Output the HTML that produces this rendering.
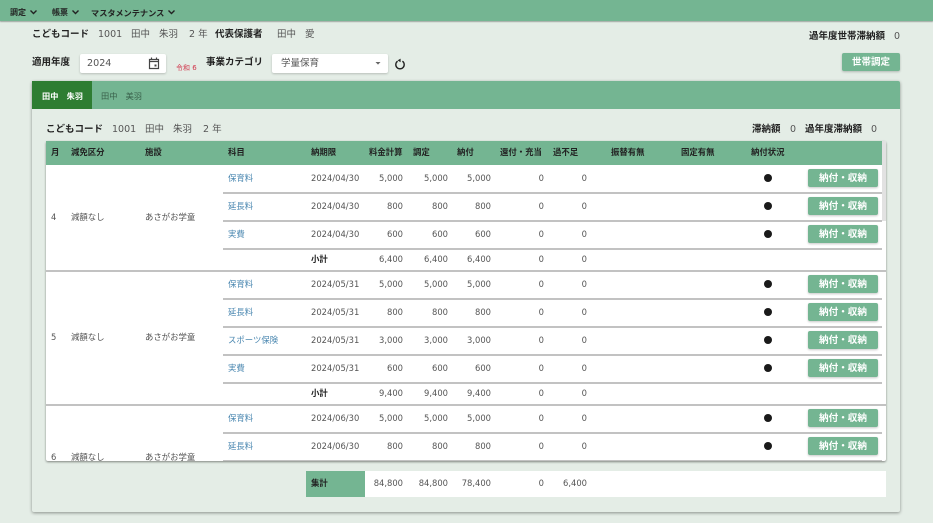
<!DOCTYPE html>
<html lang="ja"><head><meta charset="utf-8"><title>こどもコード</title>
<style>
html,body{margin:0;padding:0;width:933px;height:523px;overflow:hidden;background:#e4ede6}
body{position:relative;font-family:"DejaVu Sans","Noto Sans CJK JP",sans-serif;color:#555;font-size:8.4px;filter:blur(.3px)}
.a{position:absolute;white-space:nowrap;line-height:14px}
.b{font-weight:700;color:#222}
.t{font-size:9.5px;color:#555}
.tb{font-size:9.5px;font-weight:700;color:#222}
.g{background:#74b592}
.bx{position:absolute;background:#fff;border-radius:2px;box-shadow:0 1px 2px rgba(0,0,0,.2)}
.r{position:absolute;left:0;width:933px;height:0}
.r>span{position:absolute;white-space:nowrap;line-height:14px;top:-7px}
.r>span.s,.r>span.m,.r>span.b{top:-7px}
.s{left:228px;color:#4a87b0;font-size:8.4px}
.d{left:311px}
.c1,.c2,.c3,.c4,.c5{text-align:right;width:50px}
.c1{left:353px}.c2{left:398px}.c3{left:441px}.c4{left:494px}.c5{left:537px}
.r>span.o{left:764px;top:-4px;width:8px;height:8px;border-radius:50%;background:#1a1a1a}
.r>span.n{left:808px;top:-9px;width:70px;height:18px;line-height:20px;background:#74b592;border-radius:2px;color:#fff;font-weight:700;font-size:9.6px;text-align:center;box-shadow:0 1px 2px rgba(0,0,0,.22)}
.l{position:absolute;left:223px;width:659px;height:1.5px;background:#c2c2c2}
.gl{position:absolute;left:46px;width:840px;height:1.5px;background:#c2c2c2}
.h{font-size:8.4px;font-weight:700;color:#222;top:145px}
.m{font-size:8.4px;color:#555}
</style></head><body>
<div class="g" style="position:absolute;left:0;top:0;width:933px;height:20.5px;box-shadow:0 1px 1px rgba(0,0,0,.3)"></div>
<span class="a b" style="left:10px;top:6px;font-size:8px">調定</span>
<span class="a b" style="left:52px;top:6px;font-size:8px">帳票</span>
<span class="a b" style="left:91px;top:6px;font-size:8.2px">マスタメンテナンス</span>
<svg class="a" style="left:0;top:0" width="180" height="20" fill="none" stroke="#222" stroke-width="1.4"><path d="M30.5 10.5l3 3 3-3M72.5 10.5l3 3 3-3M168.5 10.5l3 3 3-3"/></svg>

<span class="a tb" style="left:32px;top:28px">こどもコード</span>
<span class="a t" style="left:98px;top:28px">1001</span>
<span class="a t" style="left:131px;top:28px">田中</span>
<span class="a t" style="left:159px;top:28px">朱羽</span>
<span class="a t" style="left:189px;top:28px">2 年</span>
<span class="a tb" style="left:215px;top:28px">代表保護者</span>
<span class="a t" style="left:277px;top:28px">田中</span>
<span class="a t" style="left:305px;top:28px">愛</span>
<span class="a tb" style="left:809px;top:30px">過年度世帯滞納額</span>
<span class="a t" style="left:894px;top:30px">0</span>

<span class="a tb" style="left:32px;top:55.5px">適用年度</span>
<div class="bx" style="left:80px;top:54px;width:86px;height:19px"></div>
<span class="a t" style="left:87px;top:56.5px;font-size:9.6px">2024</span>
<svg class="a" style="left:147px;top:56px" width="14" height="14" fill="none" stroke="#444" stroke-width="1.2"><path d="M2.5 3.5h9v9h-9zM2.5 5.5h9"/><path d="M4.5 1.5v2M9.5 1.5v2"/><rect x="7.5" y="8.5" width="2" height="2" fill="#444" stroke="none"/></svg>
<span class="a" style="left:176px;top:61px;font-size:7px;color:#d0344a">令和 6</span>
<span class="a tb" style="left:206px;top:55.5px">事業カテゴリ</span>
<div class="bx" style="left:272px;top:54px;width:116px;height:19px"></div>
<span class="a t" style="left:281px;top:57px">学量保育</span>
<svg class="a" style="left:374px;top:60px" width="8" height="6"><path d="M1.5 2h5L4 4.6z" fill="#666"/></svg>
<svg class="a" style="left:393px;top:57px" width="14" height="14" fill="none" stroke="#222" stroke-width="1.4"><path d="M4.6 4.2a4.2 4.2 0 1 0 4.8 0"/><path d="M7.6 1.6v3.6l-3-1.8z" fill="#222" stroke="none"/></svg>
<div style="position:absolute;left:842px;top:53px;width:58px;height:18px;line-height:19px;border-radius:2px;background:#74b592;color:#fff;font-weight:700;font-size:9.5px;text-align:center;box-shadow:0 1px 2px rgba(0,0,0,.22)">世帯調定</div>

<div style="position:absolute;left:32px;top:81px;width:868px;height:431px;background:#e4ede6;border-radius:2px;box-shadow:0 1px 3px rgba(0,0,0,.4)"></div>
<div class="g" style="position:absolute;left:32px;top:81px;width:868px;height:27.5px;border-radius:2px 2px 0 0"></div>
<div style="position:absolute;left:32px;top:81px;width:60px;height:27.5px;background:#2e7d32"></div>
<span class="a" style="left:42px;top:89px;font-size:8.2px;font-weight:700;color:#fff">田中　朱羽</span>
<span class="a" style="left:101px;top:89px;font-size:8.2px;color:#38604a">田中　美羽</span>

<span class="a tb" style="left:46px;top:123px">こどもコード</span>
<span class="a t" style="left:112px;top:123px">1001</span>
<span class="a t" style="left:145px;top:123px">田中</span>
<span class="a t" style="left:173px;top:123px">朱羽</span>
<span class="a t" style="left:203px;top:123px">2 年</span>
<span class="a tb" style="left:752px;top:123px">滞納額</span>
<span class="a t" style="left:790px;top:123px">0</span>
<span class="a tb" style="left:805px;top:123px">過年度滞納額</span>
<span class="a t" style="left:871px;top:123px">0</span>

<div style="position:absolute;left:46px;top:141px;width:840px;height:320px;background:#fff;box-shadow:0 1px 2px rgba(0,0,0,.45);border-radius:2px"></div>
<div style="position:absolute;left:0;top:0;width:933px;height:523px;clip-path:inset(141px 47px 62px 46px)">
<div style="position:absolute;left:882px;top:141px;width:4px;height:80px;background:#e2e2e2"></div>
<div class="g" style="position:absolute;left:46px;top:141px;width:836px;height:24px"></div>
<span class="a h" style="left:51px">月</span>
<span class="a h" style="left:71px">減免区分</span>
<span class="a h" style="left:145px">施設</span>
<span class="a h" style="left:228px">科目</span>
<span class="a h" style="left:311px">納期限</span>
<span class="a h" style="left:369px">料金計算</span>
<span class="a h" style="left:413px">調定</span>
<span class="a h" style="left:457px">納付</span>
<span class="a h" style="left:500px">還付・充当</span>
<span class="a h" style="left:553px">過不足</span>
<span class="a h" style="left:611px">振替有無</span>
<span class="a h" style="left:681px">固定有無</span>
<span class="a h" style="left:751px">納付状況</span>

<div class="l" style="top:192px"></div><div class="l" style="top:220px"></div><div class="l" style="top:248px"></div>
<div class="gl" style="top:270px"></div>
<div class="l" style="top:298px"></div><div class="l" style="top:326px"></div><div class="l" style="top:354px"></div><div class="l" style="top:382px"></div>
<div class="gl" style="top:404px"></div>
<div class="l" style="top:432px"></div><div class="l" style="top:459.5px"></div>

<div class="r" style="top:217px"><span style="left:51px">4</span><span class="m" style="left:71px">減額なし</span><span class="m" style="left:145px">あさがお学童</span></div>
<div class="r" style="top:337px"><span style="left:51px">5</span><span class="m" style="left:71px">減額なし</span><span class="m" style="left:145px">あさがお学童</span></div>
<div class="r" style="top:457px"><span style="left:51px">6</span><span class="m" style="left:71px">減額なし</span><span class="m" style="left:145px">あさがお学童</span></div>

<div class="r" style="top:178px"><span class="s">保育料</span><span class="d">2024/04/30</span><span class="c1">5,000</span><span class="c2">5,000</span><span class="c3">5,000</span><span class="c4">0</span><span class="c5">0</span><span class="o"></span><span class="n">納付・収納</span></div>
<div class="r" style="top:206px"><span class="s">延長料</span><span class="d">2024/04/30</span><span class="c1">800</span><span class="c2">800</span><span class="c3">800</span><span class="c4">0</span><span class="c5">0</span><span class="o"></span><span class="n">納付・収納</span></div>
<div class="r" style="top:234px"><span class="s">実費</span><span class="d">2024/04/30</span><span class="c1">600</span><span class="c2">600</span><span class="c3">600</span><span class="c4">0</span><span class="c5">0</span><span class="o"></span><span class="n">納付・収納</span></div>
<div class="r" style="top:259px"><span class="d b">小計</span><span class="c1">6,400</span><span class="c2">6,400</span><span class="c3">6,400</span><span class="c4">0</span><span class="c5">0</span></div>

<div class="r" style="top:284px"><span class="s">保育料</span><span class="d">2024/05/31</span><span class="c1">5,000</span><span class="c2">5,000</span><span class="c3">5,000</span><span class="c4">0</span><span class="c5">0</span><span class="o"></span><span class="n">納付・収納</span></div>
<div class="r" style="top:312px"><span class="s">延長料</span><span class="d">2024/05/31</span><span class="c1">800</span><span class="c2">800</span><span class="c3">800</span><span class="c4">0</span><span class="c5">0</span><span class="o"></span><span class="n">納付・収納</span></div>
<div class="r" style="top:340px"><span class="s">スポーツ保険</span><span class="d">2024/05/31</span><span class="c1">3,000</span><span class="c2">3,000</span><span class="c3">3,000</span><span class="c4">0</span><span class="c5">0</span><span class="o"></span><span class="n">納付・収納</span></div>
<div class="r" style="top:368px"><span class="s">実費</span><span class="d">2024/05/31</span><span class="c1">600</span><span class="c2">600</span><span class="c3">600</span><span class="c4">0</span><span class="c5">0</span><span class="o"></span><span class="n">納付・収納</span></div>
<div class="r" style="top:393px"><span class="d b">小計</span><span class="c1">9,400</span><span class="c2">9,400</span><span class="c3">9,400</span><span class="c4">0</span><span class="c5">0</span></div>

<div class="r" style="top:418px"><span class="s">保育料</span><span class="d">2024/06/30</span><span class="c1">5,000</span><span class="c2">5,000</span><span class="c3">5,000</span><span class="c4">0</span><span class="c5">0</span><span class="o"></span><span class="n">納付・収納</span></div>
<div class="r" style="top:446px"><span class="s">延長料</span><span class="d">2024/06/30</span><span class="c1">800</span><span class="c2">800</span><span class="c3">800</span><span class="c4">0</span><span class="c5">0</span><span class="o"></span><span class="n">納付・収納</span></div>
</div>

<div style="position:absolute;left:306px;top:471px;width:580px;height:26px;background:#fff"></div>
<div class="g" style="position:absolute;left:306px;top:471px;width:59px;height:26px"></div>
<div class="r" style="top:483px"><span class="b" style="left:311px">集計</span><span class="c1">84,800</span><span class="c2">84,800</span><span class="c3">78,400</span><span class="c4">0</span><span class="c5">6,400</span></div>
</body></html>
